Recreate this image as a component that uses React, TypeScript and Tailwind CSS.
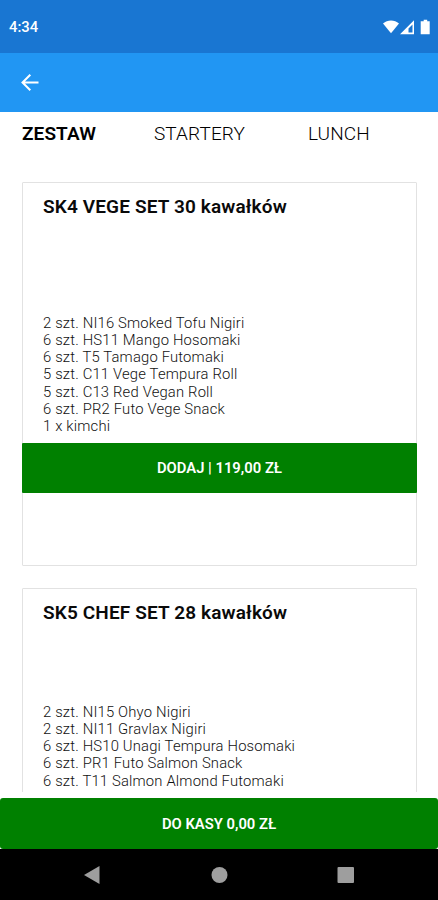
const tabs = [
    { label: "ZESTAW", style: "w-[132px] font-semibold" },
    { label: "STARTERY", style: "w-[154px] font-light" },
    { label: "LUNCH", style: "font-light" },
];

const vegeSet = [
    "2 szt. NI16 Smoked Tofu Nigiri",
    "6 szt. HS11 Mango Hosomaki",
    "6 szt. T5 Tamago Futomaki",
    "5 szt. C11 Vege Tempura Roll",
    "5 szt. C13 Red Vegan Roll",
    "6 szt. PR2 Futo Vege Snack",
    "1 x kimchi",
];

const chefSet = [
    "2 szt. NI15 Ohyo Nigiri",
    "2 szt. NI11 Gravlax Nigiri",
    "6 szt. HS10 Unagi Tempura Hosomaki",
    "6 szt. PR1 Futo Salmon Snack",
    "6 szt. T11 Salmon Almond Futomaki",
];

const StatusBar = () => (
    <div className="flex h-[53px] shrink-0 items-center justify-between bg-[#1976d2] pr-[5px] pl-[9px] text-white">
        <span className="mt-[2px] text-[14.8px] font-medium">4:34</span>
        <svg width="50" height="16" viewBox="0 0 50 16" fill="currentColor">
            <path d="M0 4.500C4.500.5 11.500.5 16 4.500L8 14.200Z" />
            <path fillRule="evenodd" d="M31 1.200v14H17ZM29.500 5.500 25.500 9.500v3.900h4Z" />
            <path d="M40.700.8h3.500v1.500h2.500v13h-9V2.300h3Z" />
        </svg>
    </div>
);

const AppBar = () => (
    <div className="flex h-[59px] shrink-0 items-center bg-[#2196f3] pl-[21px] text-white">
        <svg width="18" height="18" viewBox="0 0 18 18" fill="none" stroke="currentColor" strokeWidth="2">
            <path d="M17.500 8.500H1.800M9.300.7 1.500 8.500l7.800 7.800" />
        </svg>
    </div>
);

const ItemList = ({ items }: { items: string[] }) => (
    <ul className="pl-5 text-[14.8px] leading-[17.3px] font-light tracking-[0.18px] text-[#111]">
        {items.map((item) => (
            <li key={item} className="whitespace-nowrap">{item}</li>
        ))}
    </ul>
);

const CardTitle = ({ text }: { text: string }) => (
    <h2 className="h-[46px] pl-5 text-[19px] leading-[47px] font-semibold tracking-[0.14px] whitespace-nowrap text-[#0a0a0a]">{text}</h2>
);

const App = () => {
    return (
        <div className="flex h-[900px] w-[438px] flex-col overflow-hidden bg-white font-[Roboto,sans-serif]">
            <StatusBar />
            <AppBar />
            <div className="flex h-[44px] shrink-0 items-center pl-[22px] text-[19px] tracking-[0.1px] text-black">
                {tabs.map((tab) => (
                    <span key={tab.label} className={tab.style}>{tab.label}</span>
                ))}
            </div>
            <div className="h-[636px] shrink-0 overflow-hidden px-[22px] pt-[26px]">
                <div className="h-[384px] w-[395px] rounded-[1px] border border-[#e2e2e2]">
                    <CardTitle text="SK4 VEGE SET 30 kawałków" />
                    <div className="h-[85.5px]" />
                    <ItemList items={vegeSet} />
                    <button className="-mx-px mt-[7px] flex h-[50px] w-[395px] items-center justify-center rounded-[1px] bg-[#008000] pt-[2px] text-[14.8px] font-semibold text-white">
                        DODAJ | 119,00 ZŁ
                    </button>
                </div>
                <div className="mt-[22px] h-[384px] w-[395px] rounded-[1px] border border-[#e2e2e2]">
                    <CardTitle text="SK5 CHEF SET 28 kawałków" />
                    <div className="h-[68.5px]" />
                    <ItemList items={chefSet} />
                </div>
            </div>
            <button className="mt-[6px] flex h-[51px] shrink-0 items-center justify-center rounded-[3px] bg-[#008000] pt-[2px] text-[14.8px] font-semibold text-white">
                DO KASY 0,00 ZŁ
            </button>
            <div className="flex-1 bg-black">
                <svg width="438" height="51" viewBox="0 0 438 51" fill="#9e9e9e">
                    <path d="M99.500 17v18L84 26Z" />
                    <circle cx="219.500" cy="26" r="8" />
                    <rect x="337.500" y="18" width="16.500" height="16" rx="1" />
                </svg>
            </div>
        </div>
    );
};

export default App;
